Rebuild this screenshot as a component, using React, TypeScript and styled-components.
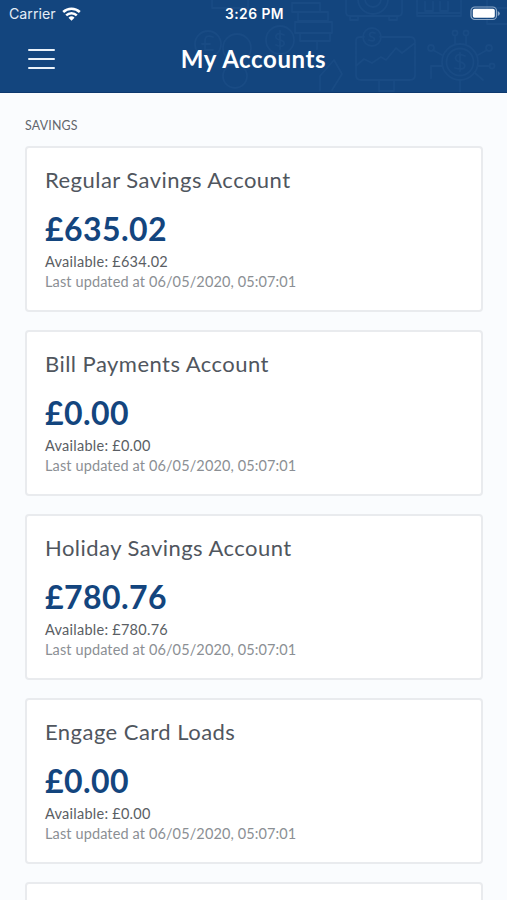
import React from "react";
import styled, { createGlobalStyle } from "styled-components";

const GlobalStyle = createGlobalStyle`
  * { box-sizing: border-box; }
  html, body { margin: 0; background: #fafcfe; }
  body { height: 900px; overflow: hidden; font-family: Lato, "Open Sans", sans-serif; }
`;

const Screen = styled.div`
  display: flex;
  flex-direction: column;
  height: 900px;
  overflow: hidden;
`;

const Header = styled.header`
  position: relative;
  flex: none;
  height: 93px;
  background: #13457e;
  border-bottom: 1px solid #0d396e;
  color: #fff;
  overflow: hidden;
`;

const Pattern = styled.svg`
  position: absolute;
  inset: 0;
  fill: none;
  stroke: #194b84;
  stroke-width: 1.8;
  stroke-linejoin: round;
  stroke-linecap: round;
`;

const StatusBar = styled.div`
  position: relative;
  display: grid;
  grid-template-columns: 1fr auto 1fr;
  align-items: center;
  height: 27px;
  padding: 0 7px 0 9px;
  font-family: Inter, sans-serif;
`;

const Carrier = styled.div`
  display: flex;
  align-items: center;
  gap: 6px;
  font-size: 14.2px;
  color: #e4edf6;
`;

const Clock = styled.div`
  font-size: 13.8px;
  font-weight: 600;
  letter-spacing: 0.5px;
`;

const Battery = styled.svg`
  justify-self: end;
`;

const TitleBar = styled.div`
  position: relative;
  display: grid;
  grid-template-columns: 28px 1fr 28px;
  align-items: center;
  height: 64px;
  padding: 0 27px;
`;

const MenuButton = styled.button`
  display: flex;
  flex-direction: column;
  gap: 7px;
  width: 27px;
  margin-left: 1px;
  padding: 0;
  border: 0;
  background: none;
`;

const MenuLine = styled.span`
  height: 2.3px;
  border-radius: 1px;
  background: #eaf2fa;
`;

const Title = styled.h1`
  margin: 0;
  text-align: center;
  font-size: 24px;
  line-height: 30px;
  font-weight: 700;
  letter-spacing: 0.6px;
`;

const Content = styled.main`
  flex: 1;
  padding: 25px 24.5px 0 25px;
`;

const SectionLabel = styled.h2`
  margin: 0;
  height: 28px;
  font-size: 12.4px;
  line-height: 16px;
  font-weight: 400;
  letter-spacing: 0.2px;
  color: #62666c;
`;

const AccountList = styled.div`
  display: flex;
  flex-direction: column;
  gap: 18px;
`;

const Card = styled.article`
  flex: none;
  height: 166px;
  padding: 16px 18px 0;
  background: #fff;
  border: 2px solid #e9ebee;
  border-radius: 4px;
`;

const AccountName = styled.h3`
  margin: 0;
  font-size: 22px;
  line-height: 32px;
  font-weight: 400;
  letter-spacing: 0.46px;
  color: #50565e;
`;

const Balance = styled.div`
  margin-top: 12px;
  font-size: 32px;
  line-height: 42px;
  font-weight: 700;
  letter-spacing: 0.45px;
  color: #13457e;
`;

const Details = styled.div`
  padding-top: 2px;
`;

const Detail = styled.div<{ $muted?: boolean }>`
  font-size: 14.5px;
  line-height: 20px;
  letter-spacing: ${(p) => (p.$muted ? "0.12px" : "0.26px")};
  color: ${(p) => (p.$muted ? "#8b8f94" : "#5a5e64")};
`;

const accounts = [
  { name: "Regular Savings Account", balance: "£635.02", available: "£634.02" },
  { name: "Bill Payments Account", balance: "£0.00", available: "£0.00" },
  { name: "Holiday Savings Account", balance: "£780.76", available: "£780.76" },
  { name: "Engage Card Loads", balance: "£0.00", available: "£0.00" },
];

function HeaderPattern() {
  return (
    <Pattern width="507" height="93" aria-hidden="true">
      {/* coins */}
      <circle cx="208" cy="44" r="13" />
      <path d="M213 37q-8-3-8 4v9h8M202 44h8" />
      <circle cx="237" cy="48" r="14" />
      <circle cx="235" cy="76" r="12" />
      <circle cx="280" cy="40" r="14" />
      <path d="M284 35c-9-4-11 4-4 5s5 9-4 5M280 31v18" />
      <path d="M212 0v8h36V0" />
      {/* stacked notes */}
      <path d="M292 3h28v9h-28zM298 12h30v9h-30zM295 22h37v11h-37zM300 33v8h30v-8M317 41v8" />
      <path d="M320 90v-14l14-16 8 14-10 16" />
      {/* safe */}
      <path d="M346 0v12q0 4 4 4h48q4 0 4-4V0M350 16v4h8v-4M389 16v4h8v-4" />
      <circle cx="373" cy="-1" r="15" />
      <circle cx="373" cy="-1" r="8" />
      {/* wallet chart */}
      <path d="M364 37h-4q-4 0-4 4v34q0 5 5 5h49q5 0 5-5V42q0-5-5-5h-30M357 65l7-6 8 4 9-6 5 3 10-12 6 5 13-10M379 80v11h15V80" />
      <circle cx="372" cy="37" r="9" />
      <path d="M375 33c-6-2-7 3-3 4s3 6-3 3" />
      {/* bank */}
      <path d="M417 0v16h44V0M425 2v9h8V2M440 2v9h8V2M417 13h44" />
      <path d="M487 0v24h20M494 8h13" />
      {/* digital coin */}
      <circle cx="460" cy="62" r="18" />
      <circle cx="460" cy="62" r="13.5" />
      <path d="M465 56c-11-5-12 5-5 6s7 10-5 6M460 53v18M455 44v-8M466 44v-8M442 55l-9-5M442 66h-11v12M478 55l9-5M478 66h12M475 73l8 7M460 80v12" />
      <circle cx="455" cy="33" r="2.5" />
      <circle cx="466" cy="33" r="2.5" />
      <circle cx="431" cy="48" r="3" />
      <circle cx="489" cy="48" r="3" />
      <circle cx="492" cy="66" r="2.5" />
    </Pattern>
  );
}

export default function App() {
  return (
    <Screen>
      <GlobalStyle />
      <Header>
        <HeaderPattern />
        <StatusBar>
          <Carrier>
            Carrier
            <svg width="19" height="14" viewBox="0 0 19 14" fill="none" stroke="#fff" strokeWidth="2.5">
              <path d="M1.2 5a11.9 11.9 0 0 1 16.6 0M4.2 8.3a7.6 7.6 0 0 1 10.6 0" />
              <path d="M6.5 10.8a4.3 4.3 0 0 1 6 0l-3 3z" fill="#fff" stroke="none" />
            </svg>
          </Carrier>
          <Clock>3:26 PM</Clock>
          <Battery width="30" height="15" viewBox="0 0 30 15">
            <rect x="1" y="1" width="25.5" height="12.5" rx="3.8" fill="none" stroke="#8ca8c7" strokeWidth="1.2" />
            <rect x="2.8" y="2.8" width="22" height="9" rx="1.8" fill="#fff" />
            <path d="M27.8 5v5q2-1 2-2.5t-2-2.5" fill="#8ca8c7" />
          </Battery>
        </StatusBar>
        <TitleBar>
          <MenuButton aria-label="Menu">
            <MenuLine />
            <MenuLine />
            <MenuLine />
          </MenuButton>
          <Title>My Accounts</Title>
        </TitleBar>
      </Header>
      <Content>
        <SectionLabel>SAVINGS</SectionLabel>
        <AccountList>
          {accounts.map((a) => (
            <Card key={a.name}>
              <AccountName>{a.name}</AccountName>
              <Balance>{a.balance}</Balance>
              <Details>
                <Detail>Available: {a.available}</Detail>
                <Detail $muted>Last updated at 06/05/2020, 05:07:01</Detail>
              </Details>
            </Card>
          ))}
          <Card />
        </AccountList>
      </Content>
    </Screen>
  );
}
